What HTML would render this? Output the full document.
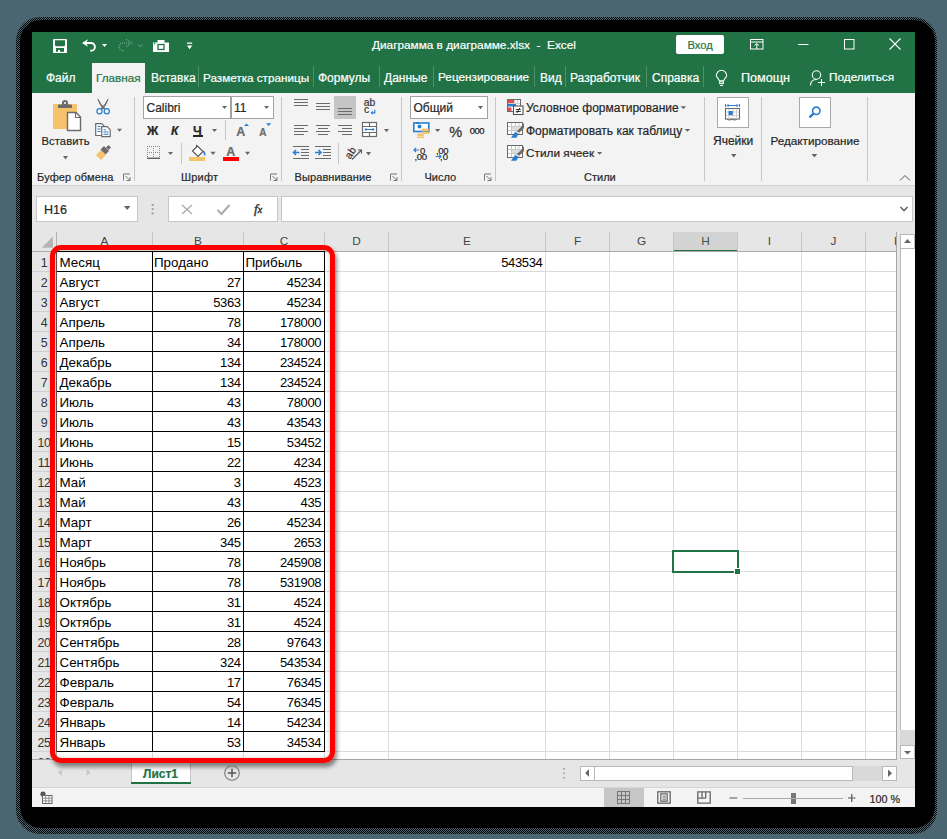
<!DOCTYPE html><html><head><meta charset="utf-8"><style>
*{margin:0;padding:0;box-sizing:border-box}
html,body{width:947px;height:839px;overflow:hidden;background:#4b6670;font-family:"Liberation Sans", sans-serif;position:relative}
.a{position:absolute}
.t{position:absolute;white-space:nowrap;line-height:1;-webkit-text-stroke:0.2px currentColor}
.cell{position:absolute;font-size:13.4px;color:#000;white-space:nowrap;line-height:1}
.num{font-size:13px;letter-spacing:-0.35px}
svg{position:absolute;left:0;top:0;overflow:visible}
</style></head><body>

<div class="a" style="left:16px;top:17px;width:921px;height:817px;background:repeating-conic-gradient(#000 0 25%,transparent 0 50%) 0 0/2px 2px;border-radius:24px"></div>
<div class="a" style="left:19.5px;top:20px;width:915px;height:808px;background:#000;border-radius:21px"></div>
<div class="a" style="left:32px;top:32px;width:883px;height:775px;background:#f3f3f3"></div>
<div class="a" style="left:32px;top:32px;width:883px;height:61px;background:#217346"></div>
<div class="t" style="left:372px;top:40px;font-size:11.8px;color:#fff;">Диаграмма в диаграмме.xlsx&nbsp; - &nbsp;Excel</div>
<div class="a" style="left:676px;top:35px;width:48px;height:19px;background:#fff;border-radius:2px"></div>
<div class="t" style="left:687.5px;top:40px;font-size:11.2px;color:#217346;">Вход</div>
<div class="a" style="left:92px;top:63px;width:53px;height:30px;background:#f3f3f3"></div>
<div class="t" style="left:46px;top:72.3px;font-size:12px;color:#fff;">Файл</div>
<div class="t" style="left:96px;top:72.3px;font-size:11.7px;color:#217346;">Главная</div>
<div class="t" style="left:151px;top:72.3px;font-size:12px;color:#fff;">Вставка</div>
<div class="t" style="left:203px;top:72.3px;font-size:11.7px;color:#fff;">Разметка страницы</div>
<div class="t" style="left:318px;top:72.3px;font-size:12px;color:#fff;">Формулы</div>
<div class="t" style="left:384px;top:72.3px;font-size:12px;color:#fff;">Данные</div>
<div class="t" style="left:438px;top:72.3px;font-size:11.8px;color:#fff;">Рецензирование</div>
<div class="t" style="left:540px;top:72.3px;font-size:12px;color:#fff;">Вид</div>
<div class="t" style="left:570px;top:72.3px;font-size:12px;color:#fff;">Разработчик</div>
<div class="t" style="left:652px;top:72.3px;font-size:12px;color:#fff;">Справка</div>
<div class="t" style="left:741px;top:72.3px;font-size:12.6px;color:#fff;">Помощн</div>
<div class="t" style="left:829px;top:72.3px;font-size:11.8px;color:#fff;">Поделиться</div>
<div class="a" style="left:198px;top:66px;width:1px;height:21px;background:#4f9069"></div>
<div class="a" style="left:313px;top:66px;width:1px;height:21px;background:#4f9069"></div>
<div class="a" style="left:379px;top:66px;width:1px;height:21px;background:#4f9069"></div>
<div class="a" style="left:433px;top:66px;width:1px;height:21px;background:#4f9069"></div>
<div class="a" style="left:534px;top:66px;width:1px;height:21px;background:#4f9069"></div>
<div class="a" style="left:565px;top:66px;width:1px;height:21px;background:#4f9069"></div>
<div class="a" style="left:646px;top:66px;width:1px;height:21px;background:#4f9069"></div>
<div class="a" style="left:703px;top:66px;width:1px;height:21px;background:#4f9069"></div>
<div class="a" style="left:134px;top:97px;width:1px;height:84px;background:#c6c6c6"></div>
<div class="a" style="left:281px;top:97px;width:1px;height:84px;background:#c6c6c6"></div>
<div class="a" style="left:401px;top:97px;width:1px;height:84px;background:#c6c6c6"></div>
<div class="a" style="left:495px;top:97px;width:1px;height:84px;background:#c6c6c6"></div>
<div class="a" style="left:704px;top:97px;width:1px;height:84px;background:#c6c6c6"></div>
<div class="a" style="left:761px;top:97px;width:1px;height:84px;background:#c6c6c6"></div>
<div class="a" style="left:867px;top:97px;width:1px;height:84px;background:#c6c6c6"></div>
<div class="t" style="left:37px;top:172px;font-size:11px;color:#262626;letter-spacing:0.15px">Буфер обмена</div>
<div class="t" style="left:181px;top:172px;font-size:11px;color:#262626;letter-spacing:0.2px">Шрифт</div>
<div class="t" style="left:294.5px;top:172px;font-size:11px;color:#262626;letter-spacing:0.1px">Выравнивание</div>
<div class="t" style="left:424.5px;top:172px;font-size:11px;color:#262626;">Число</div>
<div class="t" style="left:584px;top:172px;font-size:11px;color:#262626;">Стили</div>
<div class="t" style="left:41.5px;top:136.3px;font-size:11.2px;color:#262626;letter-spacing:0.1px">Вставить</div>
<div class="a" style="left:143px;top:96px;width:131px;height:23px;background:#fff;border:1px solid #a3a3a3"></div>
<div class="a" style="left:230px;top:97px;width:1.5px;height:21px;background:#a3a3a3"></div>
<div class="t" style="left:146.5px;top:102.3px;font-size:12px;color:#262626;">Calibri</div>
<div class="t" style="left:234px;top:102.3px;font-size:12px;color:#262626;">11</div>
<div class="t" style="left:147px;top:124.5px;font-size:12.5px;color:#262626;font-weight:bold">Ж</div>
<div class="t" style="left:171px;top:124.5px;font-size:12px;color:#262626;font-weight:bold;font-style:italic">К</div>
<div class="t" style="left:193px;top:124.5px;font-size:12.5px;color:#262626;font-weight:bold">Ч</div>
<div class="a" style="left:193px;top:135px;width:10px;height:1.5px;background:#262626"></div>
<div class="a" style="left:225px;top:120px;width:1px;height:20px;background:#c6c6c6"></div>
<div class="t" style="left:236.3px;top:125.8px;font-size:12.5px;color:#6b6b6b;font-weight:bold">A</div>
<div class="t" style="left:259.3px;top:128px;font-size:10px;color:#6b6b6b;font-weight:bold">A</div>
<div class="a" style="left:181px;top:143px;width:1px;height:21px;background:#c6c6c6"></div>
<div class="a" style="left:189px;top:157px;width:16px;height:4px;background:#f6c26b"></div>
<div class="t" style="left:226.3px;top:146.2px;font-size:12.5px;color:#6b6b6b;font-weight:bold">A</div>
<div class="a" style="left:223px;top:157px;width:16px;height:4px;background:#f00"></div>
<div class="a" style="left:334px;top:96px;width:22px;height:23px;background:#c5c5c5"></div>
<div class="t" style="left:363.8px;top:98.3px;font-size:10.3px;color:#333;">ab</div>
<div class="t" style="left:364px;top:105.3px;font-size:10.3px;color:#333;">c</div>
<div class="a" style="left:338px;top:143px;width:1px;height:21px;background:#c6c6c6"></div>
<div class="t" style="left:344.5px;top:146.5px;font-size:10.5px;color:#333;transform:rotate(-55deg);transform-origin:6px 6px">ab</div>
<div class="a" style="left:410px;top:96px;width:78px;height:23px;background:#fff;border:1px solid #a3a3a3"></div>
<div class="t" style="left:413.5px;top:102.3px;font-size:12px;color:#262626;">Общий</div>
<div class="t" style="left:449.3px;top:124.7px;font-size:14.5px;color:#3a3a3a;-webkit-text-stroke:0.3px #3a3a3a">%</div>
<div class="t" style="left:469.8px;top:126px;font-size:9.4px;color:#222;letter-spacing:-0.5px;-webkit-text-stroke:0.25px #222">000</div>
<div class="t" style="left:420px;top:145.5px;font-size:9.5px;color:#222;-webkit-text-stroke:0.2px #222">0</div>
<div class="t" style="left:414.5px;top:152px;font-size:9.5px;color:#222;-webkit-text-stroke:0.2px #222;letter-spacing:-0.3px">,00</div>
<div class="t" style="left:436px;top:145.5px;font-size:9.5px;color:#222;-webkit-text-stroke:0.2px #222;letter-spacing:-0.3px">,00</div>
<div class="t" style="left:440px;top:152px;font-size:9.5px;color:#222;-webkit-text-stroke:0.2px #222">,0</div>
<div class="t" style="left:526px;top:102.2px;font-size:12px;color:#262626;">Условное форматирование</div>
<div class="t" style="left:526px;top:124.5px;font-size:12px;color:#262626;">Форматировать как таблицу</div>
<div class="t" style="left:526px;top:147.5px;font-size:11.8px;color:#262626;">Стили ячеек</div>
<div class="a" style="left:717px;top:97px;width:32px;height:31px;background:#fff;border:1px solid #a9a9a9"></div>
<div class="t" style="left:713px;top:134.5px;font-size:12px;color:#262626;">Ячейки</div>
<div class="a" style="left:799px;top:97px;width:32px;height:31px;background:#fff;border:1px solid #a9a9a9"></div>
<div class="t" style="left:770.5px;top:134.5px;font-size:11.7px;color:#262626;">Редактирование</div>
<div class="a" style="left:32px;top:185px;width:883px;height:47px;background:#e6e6e6"></div>
<div class="a" style="left:32px;top:185px;width:883px;height:1px;background:#d2d2d2"></div>
<div class="a" style="left:36px;top:196px;width:102px;height:26px;background:#fff;border:1px solid #c6c6c6"></div>
<div class="t" style="left:44px;top:204px;font-size:12.5px;color:#262626;">H16</div>
<div class="a" style="left:168px;top:196px;width:110px;height:26px;background:#fff;border:1px solid #c6c6c6"></div>
<div class="t" style="left:254px;top:202px;font-family:'Liberation Serif',serif;font-style:italic;font-size:13.5px;color:#333;-webkit-text-stroke:0.4px #333">f<span style="font-size:10px">x</span></div>
<div class="a" style="left:281px;top:196px;width:632px;height:26px;background:#fff;border:1px solid #c6c6c6"></div>
<div class="a" style="left:32px;top:232px;width:868px;height:20px;background:#e6e6e6"></div>
<div class="a" style="left:56px;top:252px;width:841px;height:507px;background:#fff"></div>
<div class="a" style="left:56px;top:251px;width:841px;height:1px;background:#dadada"></div>
<div class="a" style="left:56px;top:271px;width:841px;height:1px;background:#dadada"></div>
<div class="a" style="left:56px;top:291px;width:841px;height:1px;background:#dadada"></div>
<div class="a" style="left:56px;top:311px;width:841px;height:1px;background:#dadada"></div>
<div class="a" style="left:56px;top:331px;width:841px;height:1px;background:#dadada"></div>
<div class="a" style="left:56px;top:351px;width:841px;height:1px;background:#dadada"></div>
<div class="a" style="left:56px;top:371px;width:841px;height:1px;background:#dadada"></div>
<div class="a" style="left:56px;top:391px;width:841px;height:1px;background:#dadada"></div>
<div class="a" style="left:56px;top:411px;width:841px;height:1px;background:#dadada"></div>
<div class="a" style="left:56px;top:431px;width:841px;height:1px;background:#dadada"></div>
<div class="a" style="left:56px;top:451px;width:841px;height:1px;background:#dadada"></div>
<div class="a" style="left:56px;top:471px;width:841px;height:1px;background:#dadada"></div>
<div class="a" style="left:56px;top:491px;width:841px;height:1px;background:#dadada"></div>
<div class="a" style="left:56px;top:511px;width:841px;height:1px;background:#dadada"></div>
<div class="a" style="left:56px;top:531px;width:841px;height:1px;background:#dadada"></div>
<div class="a" style="left:56px;top:551px;width:841px;height:1px;background:#dadada"></div>
<div class="a" style="left:56px;top:571px;width:841px;height:1px;background:#dadada"></div>
<div class="a" style="left:56px;top:591px;width:841px;height:1px;background:#dadada"></div>
<div class="a" style="left:56px;top:611px;width:841px;height:1px;background:#dadada"></div>
<div class="a" style="left:56px;top:631px;width:841px;height:1px;background:#dadada"></div>
<div class="a" style="left:56px;top:651px;width:841px;height:1px;background:#dadada"></div>
<div class="a" style="left:56px;top:671px;width:841px;height:1px;background:#dadada"></div>
<div class="a" style="left:56px;top:691px;width:841px;height:1px;background:#dadada"></div>
<div class="a" style="left:56px;top:711px;width:841px;height:1px;background:#dadada"></div>
<div class="a" style="left:56px;top:731px;width:841px;height:1px;background:#dadada"></div>
<div class="a" style="left:56px;top:751px;width:841px;height:1px;background:#dadada"></div>
<div class="a" style="left:674px;top:232px;width:63px;height:18px;background:#d3d3d3"></div>
<div class="a" style="left:673px;top:250px;width:65px;height:2px;background:#217346"></div>
<div class="a" style="left:152px;top:252px;width:1px;height:507px;background:#dadada"></div>
<div class="a" style="left:152px;top:232px;width:1px;height:19px;background:#c6c6c6"></div>
<div class="t" style="left:94.5px;top:236px;width:20px;text-align:center;font-size:11.8px;color:#444;-webkit-text-stroke:0">A</div>
<div class="a" style="left:243px;top:252px;width:1px;height:507px;background:#dadada"></div>
<div class="a" style="left:243px;top:232px;width:1px;height:19px;background:#c6c6c6"></div>
<div class="t" style="left:188.0px;top:236px;width:20px;text-align:center;font-size:11.8px;color:#444;-webkit-text-stroke:0">B</div>
<div class="a" style="left:324px;top:252px;width:1px;height:507px;background:#dadada"></div>
<div class="a" style="left:324px;top:232px;width:1px;height:19px;background:#c6c6c6"></div>
<div class="t" style="left:274.0px;top:236px;width:20px;text-align:center;font-size:11.8px;color:#444;-webkit-text-stroke:0">C</div>
<div class="a" style="left:388px;top:252px;width:1px;height:507px;background:#dadada"></div>
<div class="a" style="left:388px;top:232px;width:1px;height:19px;background:#c6c6c6"></div>
<div class="t" style="left:346.5px;top:236px;width:20px;text-align:center;font-size:11.8px;color:#444;-webkit-text-stroke:0">D</div>
<div class="a" style="left:545px;top:252px;width:1px;height:507px;background:#dadada"></div>
<div class="a" style="left:545px;top:232px;width:1px;height:19px;background:#c6c6c6"></div>
<div class="t" style="left:457.0px;top:236px;width:20px;text-align:center;font-size:11.8px;color:#444;-webkit-text-stroke:0">E</div>
<div class="a" style="left:609px;top:252px;width:1px;height:507px;background:#dadada"></div>
<div class="a" style="left:609px;top:232px;width:1px;height:19px;background:#c6c6c6"></div>
<div class="t" style="left:567.5px;top:236px;width:20px;text-align:center;font-size:11.8px;color:#444;-webkit-text-stroke:0">F</div>
<div class="a" style="left:673px;top:252px;width:1px;height:507px;background:#dadada"></div>
<div class="a" style="left:673px;top:232px;width:1px;height:19px;background:#c6c6c6"></div>
<div class="t" style="left:631.5px;top:236px;width:20px;text-align:center;font-size:11.8px;color:#444;-webkit-text-stroke:0">G</div>
<div class="a" style="left:737px;top:252px;width:1px;height:507px;background:#dadada"></div>
<div class="a" style="left:737px;top:232px;width:1px;height:19px;background:#c6c6c6"></div>
<div class="t" style="left:695.5px;top:236px;width:20px;text-align:center;font-size:11.8px;color:#3c5a47;-webkit-text-stroke:0">H</div>
<div class="a" style="left:801px;top:252px;width:1px;height:507px;background:#dadada"></div>
<div class="a" style="left:801px;top:232px;width:1px;height:19px;background:#c6c6c6"></div>
<div class="t" style="left:759.5px;top:236px;width:20px;text-align:center;font-size:11.8px;color:#444;-webkit-text-stroke:0">I</div>
<div class="a" style="left:865px;top:252px;width:1px;height:507px;background:#dadada"></div>
<div class="a" style="left:865px;top:232px;width:1px;height:19px;background:#c6c6c6"></div>
<div class="t" style="left:823.5px;top:236px;width:20px;text-align:center;font-size:11.8px;color:#444;-webkit-text-stroke:0">J</div>
<div class="t" style="left:888.0px;top:236px;width:20px;text-align:center;font-size:11.8px;color:#444;-webkit-text-stroke:0">K</div>
<div class="a" style="left:32px;top:251px;width:865px;height:1px;background:#ababab"></div>
<div class="a" style="left:896px;top:232px;width:1px;height:527px;background:#a6a6a6"></div>
<div class="a" style="left:32px;top:252px;width:24px;height:507px;background:#e6e6e6"></div>
<div class="a" style="left:56px;top:232px;width:1px;height:527px;background:#b0b0b0"></div>
<div class="a" style="left:32px;top:271px;width:24px;height:1px;background:#d0d0d0"></div>
<div class="t" style="left:32px;top:256.7px;width:24px;text-align:center;font-size:12.4px;color:#333;-webkit-text-stroke:0;letter-spacing:-0.3px">1</div>
<div class="a" style="left:32px;top:291px;width:24px;height:1px;background:#d0d0d0"></div>
<div class="t" style="left:32px;top:276.7px;width:24px;text-align:center;font-size:12.4px;color:#333;-webkit-text-stroke:0;letter-spacing:-0.3px">2</div>
<div class="a" style="left:32px;top:311px;width:24px;height:1px;background:#d0d0d0"></div>
<div class="t" style="left:32px;top:296.7px;width:24px;text-align:center;font-size:12.4px;color:#333;-webkit-text-stroke:0;letter-spacing:-0.3px">3</div>
<div class="a" style="left:32px;top:331px;width:24px;height:1px;background:#d0d0d0"></div>
<div class="t" style="left:32px;top:316.7px;width:24px;text-align:center;font-size:12.4px;color:#333;-webkit-text-stroke:0;letter-spacing:-0.3px">4</div>
<div class="a" style="left:32px;top:351px;width:24px;height:1px;background:#d0d0d0"></div>
<div class="t" style="left:32px;top:336.7px;width:24px;text-align:center;font-size:12.4px;color:#333;-webkit-text-stroke:0;letter-spacing:-0.3px">5</div>
<div class="a" style="left:32px;top:371px;width:24px;height:1px;background:#d0d0d0"></div>
<div class="t" style="left:32px;top:356.7px;width:24px;text-align:center;font-size:12.4px;color:#333;-webkit-text-stroke:0;letter-spacing:-0.3px">6</div>
<div class="a" style="left:32px;top:391px;width:24px;height:1px;background:#d0d0d0"></div>
<div class="t" style="left:32px;top:376.7px;width:24px;text-align:center;font-size:12.4px;color:#333;-webkit-text-stroke:0;letter-spacing:-0.3px">7</div>
<div class="a" style="left:32px;top:411px;width:24px;height:1px;background:#d0d0d0"></div>
<div class="t" style="left:32px;top:396.7px;width:24px;text-align:center;font-size:12.4px;color:#333;-webkit-text-stroke:0;letter-spacing:-0.3px">8</div>
<div class="a" style="left:32px;top:431px;width:24px;height:1px;background:#d0d0d0"></div>
<div class="t" style="left:32px;top:416.7px;width:24px;text-align:center;font-size:12.4px;color:#333;-webkit-text-stroke:0;letter-spacing:-0.3px">9</div>
<div class="a" style="left:32px;top:451px;width:24px;height:1px;background:#d0d0d0"></div>
<div class="t" style="left:32px;top:436.7px;width:24px;text-align:center;font-size:12.4px;color:#333;-webkit-text-stroke:0;letter-spacing:-0.3px">10</div>
<div class="a" style="left:32px;top:471px;width:24px;height:1px;background:#d0d0d0"></div>
<div class="t" style="left:32px;top:456.7px;width:24px;text-align:center;font-size:12.4px;color:#333;-webkit-text-stroke:0;letter-spacing:-0.3px">11</div>
<div class="a" style="left:32px;top:491px;width:24px;height:1px;background:#d0d0d0"></div>
<div class="t" style="left:32px;top:476.7px;width:24px;text-align:center;font-size:12.4px;color:#333;-webkit-text-stroke:0;letter-spacing:-0.3px">12</div>
<div class="a" style="left:32px;top:511px;width:24px;height:1px;background:#d0d0d0"></div>
<div class="t" style="left:32px;top:496.7px;width:24px;text-align:center;font-size:12.4px;color:#333;-webkit-text-stroke:0;letter-spacing:-0.3px">13</div>
<div class="a" style="left:32px;top:531px;width:24px;height:1px;background:#d0d0d0"></div>
<div class="t" style="left:32px;top:516.7px;width:24px;text-align:center;font-size:12.4px;color:#333;-webkit-text-stroke:0;letter-spacing:-0.3px">14</div>
<div class="a" style="left:32px;top:551px;width:24px;height:1px;background:#d0d0d0"></div>
<div class="t" style="left:32px;top:536.7px;width:24px;text-align:center;font-size:12.4px;color:#333;-webkit-text-stroke:0;letter-spacing:-0.3px">15</div>
<div class="a" style="left:32px;top:571px;width:24px;height:1px;background:#d0d0d0"></div>
<div class="t" style="left:32px;top:556.7px;width:24px;text-align:center;font-size:12.4px;color:#333;-webkit-text-stroke:0;letter-spacing:-0.3px">16</div>
<div class="a" style="left:32px;top:591px;width:24px;height:1px;background:#d0d0d0"></div>
<div class="t" style="left:32px;top:576.7px;width:24px;text-align:center;font-size:12.4px;color:#333;-webkit-text-stroke:0;letter-spacing:-0.3px">17</div>
<div class="a" style="left:32px;top:611px;width:24px;height:1px;background:#d0d0d0"></div>
<div class="t" style="left:32px;top:596.7px;width:24px;text-align:center;font-size:12.4px;color:#333;-webkit-text-stroke:0;letter-spacing:-0.3px">18</div>
<div class="a" style="left:32px;top:631px;width:24px;height:1px;background:#d0d0d0"></div>
<div class="t" style="left:32px;top:616.7px;width:24px;text-align:center;font-size:12.4px;color:#333;-webkit-text-stroke:0;letter-spacing:-0.3px">19</div>
<div class="a" style="left:32px;top:651px;width:24px;height:1px;background:#d0d0d0"></div>
<div class="t" style="left:32px;top:636.7px;width:24px;text-align:center;font-size:12.4px;color:#333;-webkit-text-stroke:0;letter-spacing:-0.3px">20</div>
<div class="a" style="left:32px;top:671px;width:24px;height:1px;background:#d0d0d0"></div>
<div class="t" style="left:32px;top:656.7px;width:24px;text-align:center;font-size:12.4px;color:#333;-webkit-text-stroke:0;letter-spacing:-0.3px">21</div>
<div class="a" style="left:32px;top:691px;width:24px;height:1px;background:#d0d0d0"></div>
<div class="t" style="left:32px;top:676.7px;width:24px;text-align:center;font-size:12.4px;color:#333;-webkit-text-stroke:0;letter-spacing:-0.3px">22</div>
<div class="a" style="left:32px;top:711px;width:24px;height:1px;background:#d0d0d0"></div>
<div class="t" style="left:32px;top:696.7px;width:24px;text-align:center;font-size:12.4px;color:#333;-webkit-text-stroke:0;letter-spacing:-0.3px">23</div>
<div class="a" style="left:32px;top:731px;width:24px;height:1px;background:#d0d0d0"></div>
<div class="t" style="left:32px;top:716.7px;width:24px;text-align:center;font-size:12.4px;color:#333;-webkit-text-stroke:0;letter-spacing:-0.3px">24</div>
<div class="a" style="left:32px;top:751px;width:24px;height:1px;background:#d0d0d0"></div>
<div class="t" style="left:32px;top:736.7px;width:24px;text-align:center;font-size:12.4px;color:#333;-webkit-text-stroke:0;letter-spacing:-0.3px">25</div>
<div class="a" style="left:32px;top:771px;width:24px;height:1px;background:#d0d0d0"></div>
<div class="t" style="left:32px;top:756.7px;width:24px;text-align:center;font-size:12.4px;color:#333;-webkit-text-stroke:0;letter-spacing:-0.3px">26</div>
<div class="cell" style="left:59.5px;top:256px">Месяц</div>
<div class="cell" style="left:154px;top:256px">Продано</div>
<div class="cell" style="left:245.5px;top:256px">Прибыль</div>
<div class="cell" style="left:59.5px;top:276px">Август</div>
<div class="cell num" style="left:152px;top:276px;width:88.7px;text-align:right">27</div>
<div class="cell num" style="left:243px;top:276px;width:78.2px;text-align:right">45234</div>
<div class="cell" style="left:59.5px;top:296px">Август</div>
<div class="cell num" style="left:152px;top:296px;width:88.7px;text-align:right">5363</div>
<div class="cell num" style="left:243px;top:296px;width:78.2px;text-align:right">45234</div>
<div class="cell" style="left:59.5px;top:316px">Апрель</div>
<div class="cell num" style="left:152px;top:316px;width:88.7px;text-align:right">78</div>
<div class="cell num" style="left:243px;top:316px;width:78.2px;text-align:right">178000</div>
<div class="cell" style="left:59.5px;top:336px">Апрель</div>
<div class="cell num" style="left:152px;top:336px;width:88.7px;text-align:right">34</div>
<div class="cell num" style="left:243px;top:336px;width:78.2px;text-align:right">178000</div>
<div class="cell" style="left:59.5px;top:356px">Декабрь</div>
<div class="cell num" style="left:152px;top:356px;width:88.7px;text-align:right">134</div>
<div class="cell num" style="left:243px;top:356px;width:78.2px;text-align:right">234524</div>
<div class="cell" style="left:59.5px;top:376px">Декабрь</div>
<div class="cell num" style="left:152px;top:376px;width:88.7px;text-align:right">134</div>
<div class="cell num" style="left:243px;top:376px;width:78.2px;text-align:right">234524</div>
<div class="cell" style="left:59.5px;top:396px">Июль</div>
<div class="cell num" style="left:152px;top:396px;width:88.7px;text-align:right">43</div>
<div class="cell num" style="left:243px;top:396px;width:78.2px;text-align:right">78000</div>
<div class="cell" style="left:59.5px;top:416px">Июль</div>
<div class="cell num" style="left:152px;top:416px;width:88.7px;text-align:right">43</div>
<div class="cell num" style="left:243px;top:416px;width:78.2px;text-align:right">43543</div>
<div class="cell" style="left:59.5px;top:436px">Июнь</div>
<div class="cell num" style="left:152px;top:436px;width:88.7px;text-align:right">15</div>
<div class="cell num" style="left:243px;top:436px;width:78.2px;text-align:right">53452</div>
<div class="cell" style="left:59.5px;top:456px">Июнь</div>
<div class="cell num" style="left:152px;top:456px;width:88.7px;text-align:right">22</div>
<div class="cell num" style="left:243px;top:456px;width:78.2px;text-align:right">4234</div>
<div class="cell" style="left:59.5px;top:476px">Май</div>
<div class="cell num" style="left:152px;top:476px;width:88.7px;text-align:right">3</div>
<div class="cell num" style="left:243px;top:476px;width:78.2px;text-align:right">4523</div>
<div class="cell" style="left:59.5px;top:496px">Май</div>
<div class="cell num" style="left:152px;top:496px;width:88.7px;text-align:right">43</div>
<div class="cell num" style="left:243px;top:496px;width:78.2px;text-align:right">435</div>
<div class="cell" style="left:59.5px;top:516px">Март</div>
<div class="cell num" style="left:152px;top:516px;width:88.7px;text-align:right">26</div>
<div class="cell num" style="left:243px;top:516px;width:78.2px;text-align:right">45234</div>
<div class="cell" style="left:59.5px;top:536px">Март</div>
<div class="cell num" style="left:152px;top:536px;width:88.7px;text-align:right">345</div>
<div class="cell num" style="left:243px;top:536px;width:78.2px;text-align:right">2653</div>
<div class="cell" style="left:59.5px;top:556px">Ноябрь</div>
<div class="cell num" style="left:152px;top:556px;width:88.7px;text-align:right">78</div>
<div class="cell num" style="left:243px;top:556px;width:78.2px;text-align:right">245908</div>
<div class="cell" style="left:59.5px;top:576px">Ноябрь</div>
<div class="cell num" style="left:152px;top:576px;width:88.7px;text-align:right">78</div>
<div class="cell num" style="left:243px;top:576px;width:78.2px;text-align:right">531908</div>
<div class="cell" style="left:59.5px;top:596px">Октябрь</div>
<div class="cell num" style="left:152px;top:596px;width:88.7px;text-align:right">31</div>
<div class="cell num" style="left:243px;top:596px;width:78.2px;text-align:right">4524</div>
<div class="cell" style="left:59.5px;top:616px">Октябрь</div>
<div class="cell num" style="left:152px;top:616px;width:88.7px;text-align:right">31</div>
<div class="cell num" style="left:243px;top:616px;width:78.2px;text-align:right">4524</div>
<div class="cell" style="left:59.5px;top:636px">Сентябрь</div>
<div class="cell num" style="left:152px;top:636px;width:88.7px;text-align:right">28</div>
<div class="cell num" style="left:243px;top:636px;width:78.2px;text-align:right">97643</div>
<div class="cell" style="left:59.5px;top:656px">Сентябрь</div>
<div class="cell num" style="left:152px;top:656px;width:88.7px;text-align:right">324</div>
<div class="cell num" style="left:243px;top:656px;width:78.2px;text-align:right">543534</div>
<div class="cell" style="left:59.5px;top:676px">Февраль</div>
<div class="cell num" style="left:152px;top:676px;width:88.7px;text-align:right">17</div>
<div class="cell num" style="left:243px;top:676px;width:78.2px;text-align:right">76345</div>
<div class="cell" style="left:59.5px;top:696px">Февраль</div>
<div class="cell num" style="left:152px;top:696px;width:88.7px;text-align:right">54</div>
<div class="cell num" style="left:243px;top:696px;width:78.2px;text-align:right">76345</div>
<div class="cell" style="left:59.5px;top:716px">Январь</div>
<div class="cell num" style="left:152px;top:716px;width:88.7px;text-align:right">14</div>
<div class="cell num" style="left:243px;top:716px;width:78.2px;text-align:right">54234</div>
<div class="cell" style="left:59.5px;top:736px">Январь</div>
<div class="cell num" style="left:152px;top:736px;width:88.7px;text-align:right">53</div>
<div class="cell num" style="left:243px;top:736px;width:78.2px;text-align:right">34534</div>
<div class="a" style="left:56px;top:251px;width:269px;height:1px;background:#000"></div>
<div class="a" style="left:56px;top:271px;width:269px;height:1px;background:#000"></div>
<div class="a" style="left:56px;top:291px;width:269px;height:1px;background:#000"></div>
<div class="a" style="left:56px;top:311px;width:269px;height:1px;background:#000"></div>
<div class="a" style="left:56px;top:331px;width:269px;height:1px;background:#000"></div>
<div class="a" style="left:56px;top:351px;width:269px;height:1px;background:#000"></div>
<div class="a" style="left:56px;top:371px;width:269px;height:1px;background:#000"></div>
<div class="a" style="left:56px;top:391px;width:269px;height:1px;background:#000"></div>
<div class="a" style="left:56px;top:411px;width:269px;height:1px;background:#000"></div>
<div class="a" style="left:56px;top:431px;width:269px;height:1px;background:#000"></div>
<div class="a" style="left:56px;top:451px;width:269px;height:1px;background:#000"></div>
<div class="a" style="left:56px;top:471px;width:269px;height:1px;background:#000"></div>
<div class="a" style="left:56px;top:491px;width:269px;height:1px;background:#000"></div>
<div class="a" style="left:56px;top:511px;width:269px;height:1px;background:#000"></div>
<div class="a" style="left:56px;top:531px;width:269px;height:1px;background:#000"></div>
<div class="a" style="left:56px;top:551px;width:269px;height:1px;background:#000"></div>
<div class="a" style="left:56px;top:571px;width:269px;height:1px;background:#000"></div>
<div class="a" style="left:56px;top:591px;width:269px;height:1px;background:#000"></div>
<div class="a" style="left:56px;top:611px;width:269px;height:1px;background:#000"></div>
<div class="a" style="left:56px;top:631px;width:269px;height:1px;background:#000"></div>
<div class="a" style="left:56px;top:651px;width:269px;height:1px;background:#000"></div>
<div class="a" style="left:56px;top:671px;width:269px;height:1px;background:#000"></div>
<div class="a" style="left:56px;top:691px;width:269px;height:1px;background:#000"></div>
<div class="a" style="left:56px;top:711px;width:269px;height:1px;background:#000"></div>
<div class="a" style="left:56px;top:731px;width:269px;height:1px;background:#000"></div>
<div class="a" style="left:56px;top:751px;width:269px;height:1px;background:#000"></div>
<div class="a" style="left:152px;top:251px;width:1px;height:501px;background:#000"></div>
<div class="a" style="left:243px;top:251px;width:1px;height:501px;background:#000"></div>
<div class="a" style="left:324px;top:251px;width:1px;height:501px;background:#000"></div>
<div class="a" style="left:56px;top:251px;width:1px;height:501px;background:#555"></div>
<div class="cell num" style="left:388px;top:256px;width:154.5px;text-align:right">543534</div>
<div class="a" style="left:672px;top:550px;width:67px;height:23px;border:2.4px solid #217346"></div>
<div class="a" style="left:733.5px;top:568px;width:7px;height:7px;background:#fff"></div>
<div class="a" style="left:734.6px;top:569px;width:5.3px;height:5px;background:#217346"></div>
<div class="a" style="left:897px;top:232px;width:18px;height:527px;background:#e6e6e6"></div>
<div class="a" style="left:900px;top:234px;width:15px;height:15px;background:#fff;border:1px solid #b8b8b8"></div>
<div class="a" style="left:900px;top:249px;width:15px;height:481px;background:#fff;border-left:1px solid #b8b8b8"></div>
<div class="a" style="left:900px;top:730px;width:15px;height:15px;background:#d9d9d9"></div>
<div class="a" style="left:900px;top:745px;width:15px;height:14px;background:#fff;border:1px solid #b8b8b8"></div>
<div class="a" style="left:32px;top:759px;width:883px;height:28px;background:#e6e6e6"></div>
<div class="a" style="left:32px;top:759px;width:865px;height:1px;background:#a6a6a6"></div>
<div class="a" style="left:131px;top:760px;width:60px;height:23px;background:#fff;border-left:1px solid #c6c6c6;border-right:1px solid #c6c6c6"></div>
<div class="a" style="left:131px;top:782px;width:60px;height:2px;background:#217346"></div>
<div class="t" style="left:143px;top:767px;font-size:12px;color:#217346;font-weight:bold;transform:scaleY(1.12);transform-origin:0 0">Лист1</div>
<div class="a" style="left:580px;top:766px;width:15px;height:15px;background:#fff;border:1px solid #b8b8b8"></div>
<div class="a" style="left:594px;top:766px;width:259px;height:15px;background:#fff;border:1px solid #b8b8b8"></div>
<div class="a" style="left:853px;top:766px;width:29px;height:15px;background:#d9d9d9"></div>
<div class="a" style="left:882px;top:766px;width:15px;height:15px;background:#fff;border:1px solid #b8b8b8"></div>
<div class="a" style="left:32px;top:787px;width:883px;height:20px;background:#f3f3f3"></div>
<div class="a" style="left:32px;top:787px;width:883px;height:1px;background:#d6d6d6"></div>
<div class="a" style="left:604px;top:788px;width:40px;height:19px;background:#c6c6c6"></div>
<div class="a" style="left:791px;top:793px;width:5px;height:11px;background:#777"></div>
<div class="t" style="left:869.5px;top:794px;font-size:10.8px;color:#262626;">100 %</div>
<div class="a" style="left:50px;top:245px;width:285px;height:518px;border:5px solid #f00;border-radius:11px;box-shadow:2px 4px 4px rgba(0,0,0,0.45), inset 0 0 4px rgba(0,0,0,0.2)"></div>
<svg width="947" height="839" viewBox="0 0 947 839"><rect x="53" y="39" width="14" height="14" rx="0.8" fill="#fff"/><path d="M55 40.2h10v5.3l-0.8 0.8h-8.4l-0.8 -0.8z" fill="#217346"/><path d="M56 48h8v3.8h-8z" fill="#217346"/><rect x="58" y="50" width="2" height="2.2" fill="#fff"/><path d="M88 39.3 L82 43 L88 46.7 L86.2 43 Z" fill="#fff"/><path d="M85 43 H91 A3.9 3.9 0 0 1 91 50.8 H90.3" fill="none" stroke="#fff" stroke-width="1.9"/><path d="M102 44H107L104.5 47Z" fill="#fff"/><path d="M126 39.3 L131.5 43 L126 46.7 M129 43 H123 A3.9 3.9 0 0 0 123 50.8 H124" fill="none" stroke="#79b08c" stroke-width="1.2" stroke-dasharray="1 1"/><path d="M138 44.5 L140.5 47 L142.5 44.5" fill="none" stroke="#6aa57f" stroke-width="1"/><path d="M153 42.5h16v9.5h-16z M157.5 40h7v3h-7z" fill="#fff"/><rect x="158" y="44.5" width="6" height="5" fill="none" stroke="#217346" stroke-width="1.3"/><rect x="154" y="43" width="1.2" height="1.2" fill="#217346"/><path d="M187 42.5h5.2v1.2h-5.2z M187 45.5h5.2l-2.6 3.7z" fill="#fff"/><rect x="750.5" y="39.5" width="12.5" height="9.5" fill="none" stroke="#fff" stroke-width="1"/><path d="M750.5 42h12.5 M756.75 44v5 M754.5 45.5l2.25-2 2.25 2" fill="none" stroke="#fff" stroke-width="1"/><path d="M798 44.5h10.5" stroke="#fff" stroke-width="1"/><rect x="844.5" y="39.5" width="9.5" height="9.5" fill="none" stroke="#fff" stroke-width="1"/><path d="M889.5 38.5l11 11 M900.5 38.5l-11 11" stroke="#fff" stroke-width="1.1"/><path d="M719.3 80.8 C719 78.8 716.4 77.6 716.4 75.4 A5.1 5.1 0 0 1 726.6 75.4 C726.6 77.6 724 78.8 723.7 80.8 Z" fill="none" stroke="#fff" stroke-width="1.1"/><rect x="719.6" y="81.8" width="3.8" height="1.8" fill="none" stroke="#fff" stroke-width="1"/><path d="M720 85.5h3" stroke="#fff" stroke-width="1.1"/><circle cx="816.5" cy="75" r="4.2" fill="none" stroke="#fff" stroke-width="1.1"/><path d="M810.5 85.5 C810.5 81.5 813 79.5 816.5 79.5" fill="none" stroke="#fff" stroke-width="1.1"/><path d="M821.5 79v7 M818 82.5h7" stroke="#fff" stroke-width="1"/><path d="M123.5 180.5V174.0H130" fill="none" stroke="#777" stroke-width="1"/><path d="M125.5 176.0L130 180.5 M130 177.0V180.5H126.5" fill="none" stroke="#777" stroke-width="1"/><path d="M270.5 180.5V174.0H277" fill="none" stroke="#777" stroke-width="1"/><path d="M272.5 176.0L277 180.5 M277 177.0V180.5H273.5" fill="none" stroke="#777" stroke-width="1"/><path d="M390.5 180.5V174.0H397" fill="none" stroke="#777" stroke-width="1"/><path d="M392.5 176.0L397 180.5 M397 177.0V180.5H393.5" fill="none" stroke="#777" stroke-width="1"/><path d="M484.5 180.5V174.0H491" fill="none" stroke="#777" stroke-width="1"/><path d="M486.5 176.0L491 180.5 M491 177.0V180.5H487.5" fill="none" stroke="#777" stroke-width="1"/><path d="M900 180.5l5 -5 5 5" fill="none" stroke="#555" stroke-width="1"/><rect x="53" y="104" width="24" height="25" rx="1" fill="#f6c26b"/><path d="M58 108v-2.5a1 1 0 0 1 1-1h3v-1.5a3 3 0 0 1 6 0v1.5h3a1 1 0 0 1 1 1v2.5z" fill="#6b6b6b"/><circle cx="65" cy="103" r="1.1" fill="#f3f3f3"/><path d="M67.5 112.5h8.5l4.5 4.5v13.5h-13z" fill="#fff" stroke="#6b6b6b" stroke-width="1.4"/><path d="M75.5 112.5v5h5" fill="none" stroke="#6b6b6b" stroke-width="1.1"/><path d="M63 156H68L65.5 159.5Z" fill="#666"/><path d="M98 99.3 Q100 104 104.8 108.6 L103 108.6 Q99.5 104 98 99.3Z M108 99.3 Q106 104 101.2 108.6 L103 108.6 Q106.5 104 108 99.3Z" fill="#6b6b6b" stroke="#6b6b6b" stroke-width="1"/><circle cx="99.5" cy="111.2" r="2.6" fill="#f3f3f3" stroke="#2a7ed2" stroke-width="1.2"/><circle cx="106.8" cy="111.2" r="2.6" fill="#f3f3f3" stroke="#2a7ed2" stroke-width="1.2"/><path d="M95.7 123.7h6l2.5 2.5v9.3h-8.5z" fill="#fff" stroke="#6b6b6b" stroke-width="1.2"/><path d="M97.5 126.5h3 M97.5 129h3 M97.5 131.5h3" stroke="#2a7ed2" stroke-width="1"/><path d="M101.7 126.7h5.5l3 3v7h-8.5z" fill="#fff" stroke="#6b6b6b" stroke-width="1.2"/><path d="M103.5 129.8h2.5 M103.5 132h5 M103.5 134.3h5" stroke="#2a7ed2" stroke-width="1"/><path d="M117 128.8H122L119.5 131.8Z" fill="#666"/><path d="M96 155 L101 150 L106 155 L101 160 Z" fill="#f6c26b"/><path d="M100.5 149.5 L104 146 L109 151 L105.5 154.5 Z" fill="#6b6b6b"/><path d="M106 147.5 L108.5 145 L111 147.5 L108.5 150 Z" fill="#6b6b6b"/><path d="M222 106H227L224.5 109Z" fill="#666"/><path d="M264 106H269L266.5 109Z" fill="#666"/><path d="M212 129H217L214.5 132Z" fill="#666"/><path d="M244 126h5l-2.5 -2.5z" fill="#2a7ed2"/><path d="M266 123.3h5.3l-2.65 2.6z" fill="#2a7ed2"/><path d="M147 146.5h13 M147 152.5h13 M147.5 146v12 M153.5 146v12 M159.5 146v12" stroke="#888" stroke-width="1" stroke-dasharray="1 1"/><path d="M147 158.3h13" stroke="#555" stroke-width="1.3"/><path d="M168 152H173L170.5 155Z" fill="#666"/><path d="M192.5 151 L197.5 146 L203 151.5 L198 156.5 Z" fill="#fff" stroke="#555" stroke-width="1.1"/><path d="M196.5 147 v-2.2" stroke="#555" stroke-width="1.1"/><path d="M203 151 q2.5 1.5 1.5 4.5" fill="#2a7ed2" stroke="#2a7ed2" stroke-width="1.4"/><path d="M210.5 151.8H215.5L213.0 155Z" fill="#666"/><path d="M245 151.8H250L247.5 155Z" fill="#666"/><path d="M294 99.5H308 M294 102.5H308 M294 105.5H308 " stroke="#6b6b6b" stroke-width="1.2"/><path d="M316 103.5H330 M316 106.5H330 M316 109.5H330 " stroke="#6b6b6b" stroke-width="1.2"/><path d="M338 108.5H352 M338 111.5H352 M338 114.5H352 " stroke="#6b6b6b" stroke-width="1.2"/><path d="M374.8 109.8v3h-2.5" fill="none" stroke="#2a7ed2" stroke-width="1.2"/><path d="M370.5 112.8l2.3-2v4z" fill="#2a7ed2"/><path d="M294 125.5H308 M294 128.5H304 M294 131.5H308 M294 134.5H304 " stroke="#6b6b6b" stroke-width="1.2"/><path d="M316 125.5H330 M318 128.5H328 M316 131.5H330 M318 134.5H328 " stroke="#6b6b6b" stroke-width="1.2"/><path d="M338 125.5H352 M342 128.5H352 M338 131.5H352 M342 134.5H352 " stroke="#6b6b6b" stroke-width="1.2"/><rect x="362.5" y="122.5" width="14" height="14" fill="#fff" stroke="#6b6b6b" stroke-width="1.2"/><path d="M362.5 126.5h14 M362.5 132.5h14 M369.5 122.5v4 M369.5 132.5v4" stroke="#6b6b6b" stroke-width="1.1"/><path d="M365 129.5h9 M366.5 128l-1.5 1.5 1.5 1.5 M372.5 128l1.5 1.5-1.5 1.5" fill="none" stroke="#2a7ed2" stroke-width="1"/><path d="M384 129H389L386.5 132.2Z" fill="#666"/><path d="M293 146.5H309 M301 149.5H309 M301 152.5H309 M301 155.5H309 M293 158.5H309 " stroke="#6b6b6b" stroke-width="1.2"/><path d="M293.5 152.5h6 M296 150l-2.5 2.5 2.5 2.5" fill="none" stroke="#2a7ed2" stroke-width="1.6"/><path d="M315 146.5H331 M323 149.5H331 M323 152.5H331 M323 155.5H331 M315 158.5H331 " stroke="#6b6b6b" stroke-width="1.2"/><path d="M315 152.5h6 M318.5 150l2.5 2.5-2.5 2.5" fill="none" stroke="#2a7ed2" stroke-width="1.6"/><path d="M352 159.5 L361.5 150 M358 150h3.5v3.5" fill="none" stroke="#555" stroke-width="1.1"/><path d="M366 152H371L368.5 155.4Z" fill="#666"/><path d="M478 106H483L480.5 109.2Z" fill="#666"/><rect x="413.8" y="123" width="15" height="8.5" fill="#fff" stroke="#2a7ed2" stroke-width="1.6"/><circle cx="419.5" cy="126.5" r="2" fill="#2a7ed2"/><path d="M416 123h3" stroke="#2a7ed2" stroke-width="2"/><rect x="421" y="128.5" width="8" height="3" rx="1.5" fill="#f6c26b"/><rect x="423" y="132" width="6" height="2" fill="#f6c26b"/><rect x="417" y="133.5" width="7" height="2.5" rx="1.2" fill="#f6c26b"/><rect x="417" y="136.5" width="7" height="1.6" fill="#f6c26b"/><path d="M435 129H440.3L437.65 132Z" fill="#666"/><path d="M414 150h5 M416 148l-2 2 2 2" fill="none" stroke="#2a7ed2" stroke-width="1.2"/><path d="M435.5 156.5h5.5 M439 154.5l2 2-2 2" fill="none" stroke="#2a7ed2" stroke-width="1.2"/><rect x="507.5" y="99.5" width="13" height="12" fill="#fff" stroke="#6b6b6b" stroke-width="1"/><rect x="508" y="100" width="6.5" height="3" fill="#e84c4c"/><rect x="508" y="103.5" width="8" height="3" fill="#2a7ed2"/><rect x="508" y="107.5" width="3.5" height="3.5" fill="#e84c4c"/><path d="M514.5 100v3.5 M517.5 100v3.5 M508 103.5h12" stroke="#ccc" stroke-width="1"/><rect x="513.5" y="106" width="9.5" height="8.5" fill="#fff" stroke="#555" stroke-width="1.1"/><path d="M515.8 109.5h5 M515.8 111.5h5 M519.8 108l-3 5" stroke="#222" stroke-width="0.9"/><path d="M680.5 106.3H686.3L683.4 109Z" fill="#666"/><rect x="507.5" y="122.5" width="15" height="12" fill="#fff" stroke="#6b6b6b" stroke-width="1"/><path d="M508 126.5h14 M508 130.5h14 M511.5 123v11 M515.5 123v11 M519 123v11" stroke="#c8c8c8" stroke-width="1"/><rect x="512" y="127" width="7" height="3" fill="#ddd"/><path d="M516.5 131.5 L522 126 L524 123 L524 128 L519.5 132.5 Z" fill="#6b6b6b"/><path d="M511 137.8 L515 132 L518.5 133.5 L516.5 137.8 Z" fill="#2a7ed2"/><path d="M684.7 129H690.2L687.45 131.7Z" fill="#666"/><rect x="507.5" y="145.5" width="15" height="12" fill="#fff" stroke="#6b6b6b" stroke-width="1"/><path d="M508 149.5h14 M508 153.5h14 M511.5 146v11 M515.5 146v11 M519 146v11" stroke="#c8c8c8" stroke-width="1"/><rect x="512" y="150" width="7" height="3" fill="#ddd"/><path d="M516.5 154.5 L522 149 L524 146 L524 151 L519.5 155.5 Z" fill="#6b6b6b"/><path d="M511 160.8 L515 155 L518.5 156.5 L516.5 160.8 Z" fill="#2a7ed2"/><path d="M597 152H602.2L599.6 154.7Z" fill="#666"/><rect x="725.5" y="108.5" width="14" height="10.5" fill="#fff" stroke="#6b6b6b" stroke-width="1.1"/><path d="M726 112h13 M726 115.5h13 M729 109v10 M733 109v10 M736.5 109v10" stroke="#d0d0d0" stroke-width="1"/><rect x="728.5" y="111" width="4.3" height="4" fill="#2a7ed2"/><path d="M727 119.5q2 1 5 0 q3 1 5 0" fill="none" stroke="#6b6b6b" stroke-width="1"/><path d="M727.5 105.5h10 M728.5 104l-1.5 1.5 1.5 1.5 M736.5 104l1.5 1.5-1.5 1.5" fill="none" stroke="#2a7ed2" stroke-width="1"/><path d="M725.5 104v3 M739.5 104v3" stroke="#2a7ed2" stroke-width="1"/><path d="M731 153.9H736.5L733.75 157.4Z" fill="#666"/><circle cx="816.3" cy="110.8" r="3.7" fill="none" stroke="#2a7ed2" stroke-width="1.6"/><path d="M813.5 113.6 L809.5 117.4" stroke="#2a7ed2" stroke-width="2.4"/><path d="M811.5 153.9H817.3L814.4 157.4Z" fill="#666"/><path d="M124 206H130.5L127.25 210Z" fill="#666"/><path d="M152.7 204v1.8 M152.7 208.2v1.8 M152.7 212.4v1.8" stroke="#999" stroke-width="2"/><path d="M182 205l10 9 M192 205l-10 9" stroke="#aaa" stroke-width="1.3"/><path d="M217.5 210 L221.5 214 L229.5 205" fill="none" stroke="#aaa" stroke-width="2"/><path d="M900.5 207l3.5 3.5 3.5 -3.5" fill="none" stroke="#666" stroke-width="1.6"/><path d="M41.7 247.8H52.9V236.4Z" fill="#b4b4b4"/><path d="M904 243H911L907.5 239Z" fill="#666"/><path d="M904 751H911L907.5 754.5Z" fill="#666"/><path d="M62 769 L58 772.5 L62 776Z M86.5 769 L90.5 772.5 L86.5 776Z" fill="#c8c8c8"/><circle cx="232" cy="773" r="7.3" fill="none" stroke="#777" stroke-width="1.1"/><path d="M227.8 773h8.4 M232 768.8v8.4" stroke="#555" stroke-width="1.5"/><path d="M564 768v1.6 M564 772.5v1.6 M564 777v1.6" stroke="#999" stroke-width="1.6"/><path d="M589 769 L585.2 773 L589 777Z" fill="#666"/><path d="M888 769.5 L892 773.2 L888 777Z" fill="#666"/><circle cx="43" cy="794" r="2.6" fill="#555"/><rect x="42.5" y="795.5" width="9.5" height="8" fill="#fff" stroke="#666" stroke-width="1"/><path d="M42.5 798.2h9.5 M42.5 800.9h9.5 M45.7 795.5v8 M48.9 795.5v8" stroke="#777" stroke-width="0.8"/><rect x="617.5" y="791.5" width="12" height="12" fill="none" stroke="#777" stroke-width="1"/><path d="M621.5 791.5v12 M625.5 791.5v12 M617.5 795.5h12 M617.5 799.5h12" stroke="#777" stroke-width="1"/><rect x="657.8" y="791.8" width="12.4" height="11.4" fill="none" stroke="#666" stroke-width="1.3"/><rect x="660.8" y="793.8" width="6.4" height="7.4" fill="none" stroke="#666" stroke-width="1.2"/><path d="M662.5 796h3.5 M662.5 797.9h3.5 M662.5 799.8h3.5" stroke="#666" stroke-width="0.9"/><path d="M697.8 791.8h12.4v11.4h-12.4z M697.8 798.2h8 M702 791.8v6.4 M705.7 791.8v6.4" fill="none" stroke="#666" stroke-width="1.3"/><path d="M729.5 798h7.8 M743 798.5h99.5" stroke="#555" stroke-width="1.2"/><path d="M743 798.5h99.5" stroke="#aaa" stroke-width="1"/><path d="M848 798h7.5 M851.75 794v8" stroke="#555" stroke-width="1.2"/></svg>
</body></html>
